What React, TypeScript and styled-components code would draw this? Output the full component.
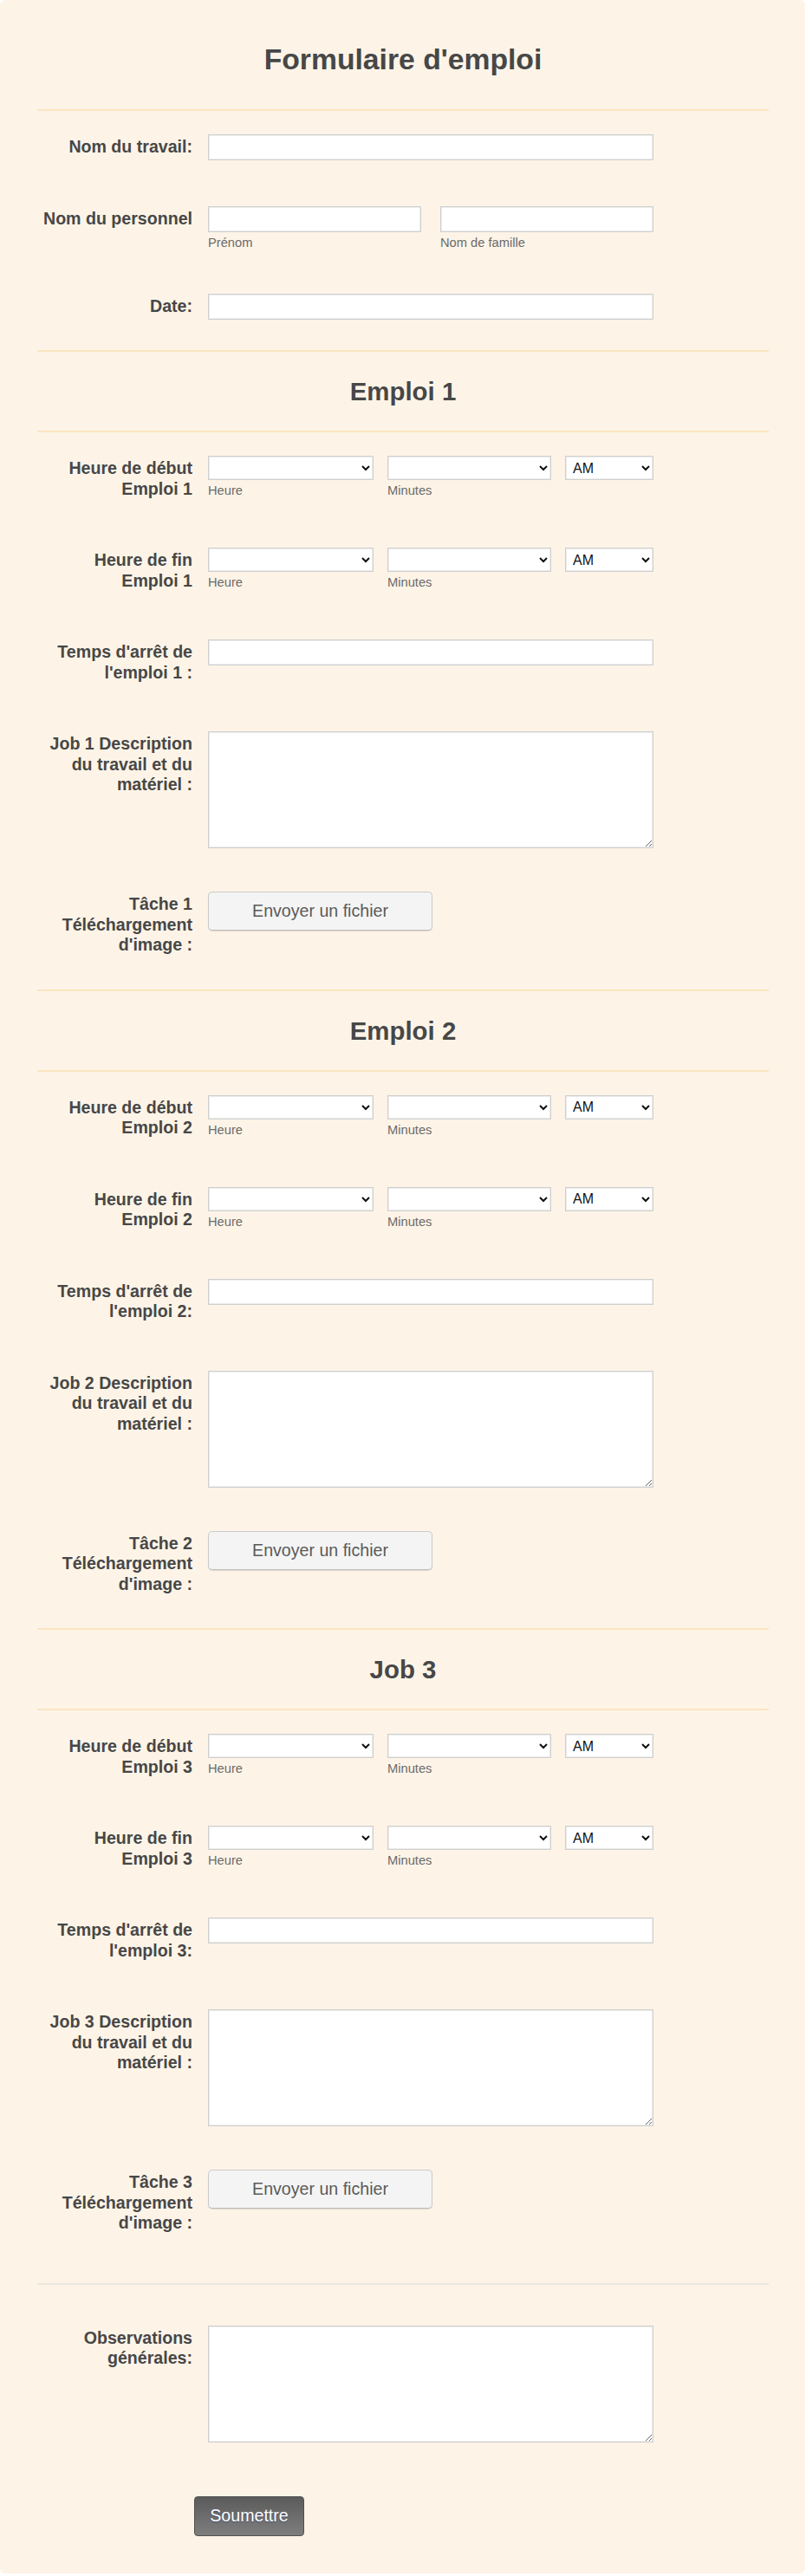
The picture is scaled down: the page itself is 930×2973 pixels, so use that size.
import React from "react";
import styled, { createGlobalStyle } from "styled-components";

const Global = createGlobalStyle`
  html, body { margin: 0; padding: 0; background: #ffffff; }
  body { font-family: "Liberation Sans", Arial, Helvetica, sans-serif; color: #474747; }
  * { box-sizing: border-box; }
`;

const Card = styled.form`
  width: 929px;
  background: #fdf4e7;
  border-radius: 6px;
  padding: 0 42px 43px 43px;
`;

const Header = styled.div`
  padding: 48px 0 38px;
  border-bottom: 2px solid #fbe5bf;
  text-align: center;
`;

const Title = styled.h1`
  margin: 0;
  font-size: 33.7px;
  line-height: 40px;
  font-weight: 700;
  color: #474747;
`;

const SectionHead = styled.div`
  margin-top: 10px;
  border-top: 2px solid #fbe5bf;
  border-bottom: 2px solid #fbe5bf;
  padding: 28px 0 27px;
  text-align: center;
`;

const SectionTitle = styled.h2`
  margin: 0;
  font-size: 29.4px;
  line-height: 36px;
  font-weight: 700;
  color: #474747;
`;

const Row = styled.div`
  display: flex;
  align-items: flex-start;
  padding: 27px 0 23px;
`;

const Label = styled.label`
  flex: 0 0 197px;
  width: 197px;
  padding: 3px 18px 6px 4px;
  text-align: right;
  font-size: 19.6px;
  line-height: 23.5px;
  font-weight: 700;
  color: #474747;
`;

const Field = styled.div`
  display: flex;
  flex-direction: column;
`;

const TextInput = styled.input<{ $w?: number }>`
  width: ${(p) => p.$w ?? 514}px;
  height: 30px;
  margin: 0;
  padding: 0 6px;
  background: #ffffff;
  border: 1px solid #cfcfcf;
  box-shadow: inset 0 0 0 1px #ececec;
  font: 16px "Liberation Sans", Arial, sans-serif;
  color: #333;
  outline: none;
`;

const TextArea = styled.textarea`
  width: 514px;
  height: 135px;
  margin: 0;
  padding: 6px;
  background: #ffffff;
  border: 1px solid #cfcfcf;
  box-shadow: inset 0 0 0 1px #ececec;
  font: 16px "Liberation Sans", Arial, sans-serif;
  color: #333;
  display: block;
  outline: none;
`;

const Select = styled.select<{ $w: number }>`
  width: ${(p) => p.$w}px;
  height: 28px;
  margin: 0;
  padding: 0 4px;
  background-color: #ffffff;
  border: 1px solid #cfcfcf;
  box-shadow: inset 0 0 0 1px #ececec;
  border-radius: 0;
  font: 16px "Liberation Sans", Arial, sans-serif;
  color: #111;
  outline: none;
`;

const SubLabel = styled.span`
  display: block;
  margin-top: 3px;
  font-size: 14.7px;
  line-height: 18px;
  color: #6b6b6b;
`;

const Group = styled.div<{ $gap: number }>`
  display: flex;
  gap: ${(p) => p.$gap}px;
`;

const Part = styled.div`
  display: flex;
  flex-direction: column;
`;

const UploadButton = styled.button`
  width: 259px;
  height: 45px;
  border: 1px solid #cbcbcb;
  border-bottom-color: #bdbdbd;
  border-radius: 5px;
  background: #f4f4f4;
  box-shadow: 0 1px 1px rgba(0, 0, 0, 0.12);
  font: 19.6px "Liberation Sans", Arial, sans-serif;
  color: #5a5a5a;
  cursor: pointer;
`;

const PageBreak = styled.div`
  margin: 28px 0 20px;
  border-top: 2px solid #ebe7df;
`;

const SubmitArea = styled.div`
  padding: 39px 0 0 181px;
`;

const SubmitButton = styled.button`
  width: 127px;
  height: 46px;
  border: 1px solid #4f4f4f;
  border-radius: 4px;
  background: linear-gradient(#5b5b5b, #7e7e7e);
  font: 19.6px "Liberation Sans", Arial, sans-serif;
  color: #ffffff;
  text-shadow: 0 1px 1px rgba(40, 60, 110, 0.6);
  cursor: pointer;
`;

type Section = {
  title: string;
  n: number;
  stop: string;
};

const sections: Section[] = [
  { title: "Emploi 1", n: 1, stop: "Temps d'arrêt de l'emploi 1 :" },
  { title: "Emploi 2", n: 2, stop: "Temps d'arrêt de l'emploi 2:" },
  { title: "Job 3", n: 3, stop: "Temps d'arrêt de l'emploi 3:" },
];

function TimeRow({ label }: { label: string }) {
  return (
    <Row>
      <Label>{label}</Label>
      <Group $gap={16}>
        <Part>
          <Select $w={191} defaultValue="">
            <option value=""></option>
          </Select>
          <SubLabel>Heure</SubLabel>
        </Part>
        <Part>
          <Select $w={189} defaultValue="">
            <option value=""></option>
          </Select>
          <SubLabel>Minutes</SubLabel>
        </Part>
        <Part>
          <Select $w={102} defaultValue="AM">
            <option value="AM">AM</option>
            <option value="PM">PM</option>
          </Select>
        </Part>
      </Group>
    </Row>
  );
}

function JobSection({ s }: { s: Section }) {
  return (
    <>
      <SectionHead>
        <SectionTitle>{s.title}</SectionTitle>
      </SectionHead>
      <TimeRow label={`Heure de début Emploi ${s.n}`} />
      <TimeRow label={`Heure de fin Emploi ${s.n}`} />
      <Row>
        <Label>{s.stop}</Label>
        <Field>
          <TextInput type="text" />
        </Field>
      </Row>
      <Row>
        <Label>{`Job ${s.n} Description du travail et du matériel :`}</Label>
        <Field>
          <TextArea />
        </Field>
      </Row>
      <Row>
        <Label>{`Tâche ${s.n} Téléchargement d'image :`}</Label>
        <Field>
          <UploadButton type="button">Envoyer un fichier</UploadButton>
        </Field>
      </Row>
    </>
  );
}

export default function App() {
  return (
    <>
      <Global />
      <Card onSubmit={(e) => e.preventDefault()}>
        <Header>
          <Title>Formulaire d'emploi</Title>
        </Header>
        <Row>
          <Label>Nom du travail:</Label>
          <Field>
            <TextInput type="text" />
          </Field>
        </Row>
        <Row>
          <Label>Nom du personnel</Label>
          <Group $gap={22}>
            <Part>
              <TextInput type="text" $w={246} />
              <SubLabel>Prénom</SubLabel>
            </Part>
            <Part>
              <TextInput type="text" $w={246} />
              <SubLabel>Nom de famille</SubLabel>
            </Part>
          </Group>
        </Row>
        <Row>
          <Label>Date:</Label>
          <Field>
            <TextInput type="text" />
          </Field>
        </Row>
        {sections.map((s) => (
          <JobSection key={s.n} s={s} />
        ))}
        <PageBreak />
        <Row>
          <Label>Observations générales:</Label>
          <Field>
            <TextArea />
          </Field>
        </Row>
        <SubmitArea>
          <SubmitButton type="submit">Soumettre</SubmitButton>
        </SubmitArea>
      </Card>
    </>
  );
}
